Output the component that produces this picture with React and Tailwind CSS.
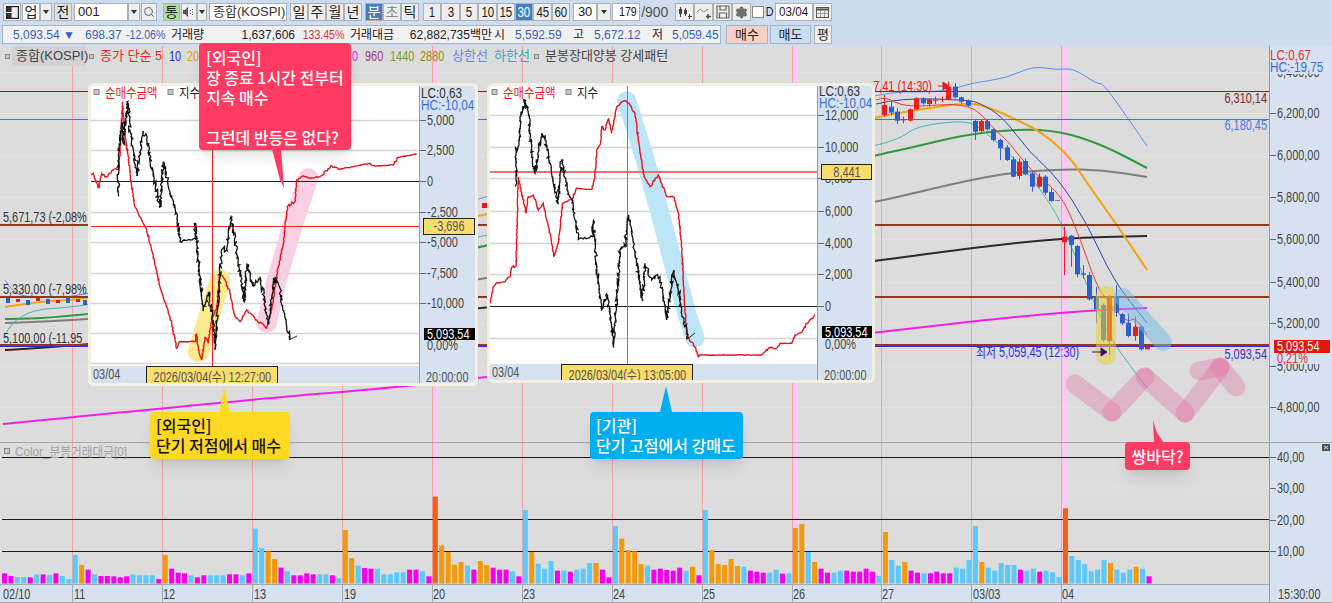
import { Search, Settings } from "lucide-react";

// 30-minute bars, one string per bar: top in crop units, colour key
const barData =
  "400m 408m 411b 411b 412m 403b 403m 405b 400m 408b 417b " +
  "345b 375o 389m 403b 408m 408m 409m 412m 409m 403b 406b 406b 406b 417m " +
  "345o 386m 398m 400m 406b 412m 406m 406b 406b 406b 403m 403m 406b 400m " +
  "266b 324b 334o 357o 383m 394b 406m 406m 400m 403m 403b 403b 406m 415b " +
  "270o 354o 377b 384m 386m 386b 403b 403b 397b 397b 389m 389m 394b 409m " +
  "170d 316o 336o 374o 366o 377b 389m 363o 375o 383m 389m 389m 394b 409m " +
  "210b 336o 371b 386b 363b 392m 392b 395m 389b 386b 369b 369o 389m 412m " +
  "258b 296o 330o 334o 372o 377b 389m 386m 390m 392m 383m 392b 380o 406m " +
  "210b 330o 372o 375o 357o 378o 380b 392m 395m 398m 398b 389b 401m 400b " +
  "264o 252o 336b 366o 386m 398m 398b 392b 392m 395m 395m 386m 395m 408b " +
  "276o 360b 377b 366o 392m 398m 400b 400m 395m 400m 400m 383b 386b 360b " +
  "258b 366o 383b 392b 369b 375b 375b 389m 392b 386b 395m 392b 397b 411b " +
  "205d 348b 360b 372b 394b 389b 360b 369o 389b 398b 389b 380o 386b 409m";
const barColor = { m: "#f500ef", b: "#5cc8fb", o: "#f39a0c", d: "#f0620f" };

const dayLines = [72, 162, 252, 342, 432, 522, 612, 702, 792, 881, 971, 1061];
const bands = [432, 792, 1061];
const dayLabels = [
  [3, "02/10"], [74, "11"], [163, "12"], [254, "13"], [344, "19"], [433, "20"], [523, "23"],
  [613, "24"], [703, "25"], [793, "26"], [882, "27"], [973, "03/03"], [1062, "04"],
];

// x center, body top, body bottom, wick top, wick bottom, red?
const candles = [
  [41, 195, 225, 165, 230, 1], [62, 200, 218, 185, 225, 0], [80, 215, 242, 205, 252, 0], [100, 238, 241, 230, 250, 1],
  [121, 208, 242, 205, 244, 1], [139, 175, 208, 172, 210, 1], [158, 175, 190, 172, 194, 0], [176, 178, 192, 175, 200, 1],
  [195, 179, 182, 170, 192, 1], [215, 177, 180, 170, 186, 1], [235, 140, 178, 125, 180, 1], [255, 140, 172, 130, 175, 0],
  [273, 172, 185, 170, 190, 0], [293, 182, 197, 178, 200, 0], [314, 243, 275, 240, 300, 0], [332, 243, 273, 240, 276, 1],
  [351, 243, 268, 238, 272, 0], [370, 268, 300, 265, 304, 0], [389, 300, 325, 296, 360, 0], [410, 322, 360, 315, 363, 0],
  [428, 358, 410, 350, 412, 0], [448, 365, 408, 355, 418, 1], [466, 363, 403, 355, 406, 0], [486, 400, 440, 395, 455, 0],
  [506, 410, 440, 400, 443, 1], [524, 410, 458, 405, 466, 0], [544, 456, 483, 445, 485, 0], [562, 481, 483, 481, 483, 0],
  [582, 590, 607, 560, 705, 1], [602, 587, 615, 585, 680, 0], [620, 618, 703, 615, 712, 0], [640, 700, 704, 675, 716, 0],
  [658, 705, 778, 695, 782, 0], [678, 770, 808, 740, 850, 0], [698, 795, 900, 790, 905, 0], [716, 772, 903, 765, 945, 1],
  [737, 768, 818, 735, 830, 0], [755, 822, 850, 818, 855, 0], [775, 848, 888, 820, 892, 0], [795, 860, 888, 830, 902, 1],
  [813, 860, 928, 858, 932, 0], [832, 920, 928, 920, 928, 1],
];

const upperTicks = [
  [72, "6,400,00"], [113, "6,200,00"], [155, "6,000,00"], [197, "5,800,00"], [239, "5,600,00"],
  [282, "5,400,00"], [323, "5,200,00"], [366, "5,000,00"], [407, "4,800,00"],
];

const inset1Red = [
  [273, 285], [280, 280], [295, 325], [305, 280], [320, 290], [340, 270], [355, 268], [362, 190], [368, 65], [375, 170], [385, 230],
  [395, 320], [405, 380], [420, 410], [440, 450], [460, 530], [480, 620], [500, 680], [515, 730], [530, 805], [540, 785], [585, 785],
  [590, 760], [595, 810], [605, 840], [615, 770], [625, 790], [635, 720], [650, 680], [660, 580], [675, 600], [690, 640], [705, 710],
  [720, 725], [740, 690], [770, 720], [800, 745], [815, 690], [835, 560], [850, 490], [862, 380], [885, 365], [890, 300], [905, 290],
  [925, 295], [960, 290], [995, 258], [1015, 268], [1060, 260], [1110, 250], [1130, 258], [1180, 255], [1195, 232], [1250, 222],
];
const inset1Black = [
  [355, 345], [355, 225], [365, 130], [370, 190], [383, 65], [390, 150], [400, 210], [410, 285], [430, 155], [440, 180], [460, 290],
  [480, 378], [490, 245], [510, 340], [530, 400], [540, 485], [585, 475], [585, 430], [595, 540], [610, 690], [625, 640], [640, 720],
  [645, 808], [665, 510], [680, 510], [693, 410], [710, 520], [733, 665], [740, 550], [760, 620], [780, 590], [805, 730], [825, 590],
  [840, 625], [848, 690], [870, 780],
];
const inset2Red = [
  [28, 678], [40, 620], [50, 608], [75, 605], [90, 590], [95, 562], [108, 558], [112, 400], [115, 290], [125, 340], [138, 398], [145, 350],
  [160, 345], [175, 390], [190, 370], [200, 420], [212, 470], [222, 530], [235, 490], [248, 370], [258, 365], [275, 360], [290, 325],
  [335, 328], [345, 290], [350, 210], [362, 190], [365, 140], [375, 150], [385, 115], [395, 160], [410, 80], [435, 62], [450, 75], [465, 100],
  [480, 215], [492, 290], [510, 320], [535, 285], [545, 310], [560, 350], [580, 350], [595, 400], [605, 500], [612, 640], [620, 760],
  [630, 785], [640, 790], [655, 830], [665, 825], [750, 825], [845, 825], [865, 805], [890, 805], [900, 790], [935, 790], [945, 765],
  [965, 758], [980, 730], [1005, 705],
];
const inset2Black = [
  [108, 315], [108, 220], [118, 180], [122, 110], [135, 60], [145, 100], [155, 210], [165, 280], [185, 160], [195, 180], [215, 280],
  [233, 370], [245, 240], [262, 330], [280, 380], [295, 478], [338, 470], [340, 425], [350, 560], [365, 690], [380, 640], [395, 740],
  [400, 800], [420, 510], [435, 500], [445, 405], [465, 520], [487, 660], [495, 550], [515, 600], [540, 590], [560, 720], [580, 575],
  [595, 630], [605, 700], [625, 775],
];

// crop coordinates to page coordinates
const mapZ = (pts, ox, oy) => pts.map(([x, y]) => [ox + x / 3, oy + y / 3]);
const toStr = (pts) => pts.map(([x, y]) => `${x.toFixed(1)},${y.toFixed(1)}`).join(" ");

// adds tick-like jitter so a few hand points read as an intraday series
const wiggle = (pts, amp, seed = 1) => {
  const out = [];
  let s = seed;
  const next = () => {
    s = (s * 9301 + 49297) % 233280;
    return s / 233280 - 0.5;
  };
  for (let i = 0; i < pts.length - 1; i++) {
    const [x0, y0] = pts[i];
    const [x1, y1] = pts[i + 1];
    const n = Math.max(1, Math.round(Math.hypot(x1 - x0, y1 - y0) / 1.6));
    for (let k = 0; k < n; k++) {
      const t = k / n;
      const jx = k === 0 ? 0 : next() * amp * 0.35;
      const jy = k === 0 ? 0 : next() * amp;
      // keep flat stretches (lunch gap, closing plateau) quieter than the moving parts
      const flat = Math.abs(y1 - y0) < 4 && Math.abs(x1 - x0) > 10 ? 0.3 : 1;
      out.push([x0 + (x1 - x0) * t + jx * flat, y0 + (y1 - y0) * t + jy * flat]);
    }
  }
  out.push(pts[pts.length - 1]);
  return toStr(out);
};

// moving averages are curves, so run quadratic segments through the midpoints
const smooth = (pts) => {
  let d = `M${pts[0][0]} ${pts[0][1]}`;
  for (let i = 1; i < pts.length - 1; i++) {
    const mx = (pts[i][0] + pts[i + 1][0]) / 2;
    const my = (pts[i][1] + pts[i + 1][1]) / 2;
    d += ` Q${pts[i][0]} ${pts[i][1]} ${mx} ${my}`;
  }
  const last = pts[pts.length - 1];
  return `${d} L${last[0]} ${last[1]}`;
};

const Line = ({ pts, c, w = 1 }) => <path d={smooth(pts)} fill="none" stroke={c} strokeWidth={w} />;

// chart labels use a tall narrow bitmap font in the picture
const T = ({ x, y, c = "#444", s = 14, a = "start", sx = 0.78, children }) => (
  <text transform={`translate(${x} ${y}) scale(${sx} 1)`} fill={c} fontSize={s} textAnchor={a}>
    {children}
  </text>
);

const Btn = ({ className = "", bg = "bg-[#eeeeee]", children }) => (
  <div className={`h-[18px] shrink-0 flex items-center justify-center border border-[#a9b1ba] text-[14px] text-[#222] ${bg} ${className}`}>
    {children}
  </div>
);
const Field = ({ className = "", children }) => (
  <div className={`h-[18px] shrink-0 flex items-center border border-[#a9b1ba] bg-white text-[13px] text-[#222] whitespace-nowrap ${className}`}>
    {children}
  </div>
);
const Drop = ({ className = "" }) => (
  <Btn className={className}>
    <span className="w-0 h-0 border-x-[3.5px] border-x-transparent border-t-[4px] border-t-[#333]" />
  </Btn>
);
const Narrow = ({ children }) => <span className="inline-block scale-x-[.82] whitespace-nowrap">{children}</span>;

const Toolbar = () => (
  <div className="h-[24px] pt-[3px] pl-[3px] flex items-start">
    <Btn className="w-[18px]">
      <svg width="13" height="13" viewBox="0 0 13 13" fill="none" stroke="#222">
        <rect x="0.5" y="0.5" width="12" height="12" strokeWidth="1.4" />
        <rect x="1" y="1" width="4" height="11" fill="#3a3a3a" />
        <path d="M0 6.5h7" stroke="#eee" />
      </svg>
    </Btn>
    <Btn className="w-[18px] ml-px" bg="bg-white">업</Btn>
    <Drop className="w-[12px]" />
    <Btn className="w-[18px] ml-[2px]" bg="bg-[#e2e2e2]">전</Btn>
    <Field className="w-[54px] ml-[2px] pl-[3px]">001</Field>
    <Drop className="w-[12px]" />
    <Btn className="w-[16px] ml-px">
      <Search size={12} color="#666" />
    </Btn>
    <Btn className="w-[17px] ml-[6px] text-[#2f6b2f]" bg="bg-[#b4dc9a]">통</Btn>
    <Btn className="w-[16px] ml-px">
      <svg width="12" height="10" viewBox="0 0 12 10" fill="#555">
        <path d="M0 3h2l3-3v10L2 7H0z" />
        <path d="M7 3h1v1H7zM7 6h1v1H7zM9 2h1v1H9zM9 4.5h1v1H9zM9 7h1v1H9z" />
      </svg>
    </Btn>
    <Drop className="w-[10px]" />
    <Field className="w-[78px] ml-[2px] pl-[3px] text-[#333]">종합(KOSPI)</Field>
    <Btn className="w-[18px] ml-[3px]">일</Btn>
    <Btn className="w-[18px]">주</Btn>
    <Btn className="w-[18px]">월</Btn>
    <Btn className="w-[18px]">년</Btn>
    <Btn className="w-[18px] ml-[3px] !text-white" bg="bg-[#3f7fc4]">분</Btn>
    <Btn className="w-[18px] !text-[#888]">초</Btn>
    <Btn className="w-[18px]">틱</Btn>
    {["1", "3", "5", "10", "15"].map((n, i) => (
      <Btn key={n} className={i === 0 ? "w-[18.4px] ml-[4px]" : "w-[18.4px]"}>
        <Narrow>{n}</Narrow>
      </Btn>
    ))}
    <Btn className="w-[18.4px] !text-white" bg="bg-[#3f7fc4]">
      <Narrow>30</Narrow>
    </Btn>
    <Btn className="w-[18.4px]">
      <Narrow>45</Narrow>
    </Btn>
    <Btn className="w-[18.4px]">
      <Narrow>60</Narrow>
    </Btn>
    <Field className="w-[24px] ml-[3px] justify-center">30</Field>
    <Drop className="w-[14px]" />
    <Field className="w-[28px] ml-px justify-end">
      <Narrow>179</Narrow>
    </Field>
    <div className="w-[35px] pl-px h-[18px] flex items-center text-[14px] text-[#555]">/900</div>
    <Btn className="w-[19px]">
      <svg width="14" height="13" viewBox="0 0 14 13" fill="#444">
        <path d="M1 3h3v5H1zM2 1h1v10H2zM6 4h3v4H6zM7 2h1v8H7z" />
        <path d="M10 10h1V8h1v2h2v1h-2v2h-1v-2h-1z" />
      </svg>
    </Btn>
    <Btn className="w-[19px]">
      <svg width="14" height="13" viewBox="0 0 14 13" fill="none" stroke="#888">
        <path d="M0 6l3-3 4 3 4-3" />
        <path d="M11 8v5M9 10.5h5" stroke="#444" strokeWidth="1.4" />
      </svg>
    </Btn>
    <Btn className="w-[19px]">
      <svg width="14" height="14" viewBox="0 0 14 14" fill="none" stroke="#666" strokeWidth="1.2">
        <path d="M1 1h12v12H1z" />
        <path d="M4 1v4h6V1M3.500 13V8h7v5" />
      </svg>
    </Btn>
    <Btn className="w-[19px]">
      <Settings size={13} color="#666" fill="#777" />
    </Btn>
    <div className="w-[12px] h-[12px] mt-[3px] ml-px border border-[#888] bg-white" />
    <div className="w-[11px] h-[18px] flex items-center justify-center text-[13px] text-[#222]">
      <Narrow>D</Narrow>
    </div>
    <Field className="w-[38px] pl-[3px]">
      <span className="inline-block origin-left scale-x-[.9]">03/04</span>
    </Field>
    <Btn className="w-[19px]">
      <svg width="13" height="12" viewBox="0 0 13 12" fill="none" stroke="#555">
        <rect x="0.5" y="1.5" width="12" height="10" />
        <path d="M0 3.500h13" strokeWidth="2" />
        <path d="M0.500 7.500h12M4.500 4v7M8.500 4v7" stroke="#999" />
      </svg>
    </Btn>
  </div>
);

const InfoRow = () => (
  <div className="h-[22px] pt-px pl-[2px] flex items-start text-[12px]">
    <div className="w-[719px] h-[19px] flex items-center border border-[#aab4c0] bg-[#f1f1f1] pl-[10px] text-[#222] whitespace-nowrap">
      <span className="w-[72px] text-[#2f62c4]">5,093.54 ▼</span>
      <span className="w-[41px] text-[#2f62c4]">698.37</span>
      <span className="w-[45px] text-[#2f62c4]">
        <span className="inline-block origin-left scale-x-[.88]">-12.06%</span>
      </span>
      <span className="w-[50px]">거래량</span>
      <span className="w-[74px] text-right">1,637,606</span>
      <span className="w-[49px] text-right text-[#e03030]">
        <span className="inline-block origin-right scale-x-[.88]">133.45%</span>
      </span>
      <span className="w-[50px] ml-[6px]">거래대금</span>
      <span className="w-[92px] text-right">62,882,735백만</span>
      <span className="w-[21px] ml-[2px]">시</span>
      <span className="w-[58px] text-[#2f62c4]">5,592.59</span>
      <span className="w-[21px]">고</span>
      <span className="w-[58px] text-[#2f62c4]">5,672.12</span>
      <span className="w-[20px]">저</span>
      <span className="text-[#2f62c4]">5,059.45</span>
    </div>
    <div className="w-[42px] h-[19px] ml-[5px] flex items-center justify-center border border-[#aab4c0] bg-[#f6cfc6] text-[13px] text-[#222]">매수</div>
    <div className="w-[41px] h-[19px] ml-[2px] flex items-center justify-center border border-[#aab4c0] bg-[#c8def4] text-[13px] text-[#222]">매도</div>
    <div className="w-[18px] h-[19px] ml-[3px] flex items-center justify-center border border-[#aab4c0] bg-[#eeeeee] text-[13px] text-[#222]">평</div>
  </div>
);

const DayMarks = ({ top, bottom }) => (
  <>
    {bands.map((x) => (
      <rect key={x} x={x} y={top} width="6" height={bottom - top} fill="#fcc9f6" />
    ))}
    {dayLines.map((x) => (
      <line key={x} x1={x + 0.5} x2={x + 0.5} y1={top} y2={bottom} stroke="#f2a4a4" />
    ))}
  </>
);

const UpperPlot = () => (
  <svg className="block w-[1269px] h-[396px]" viewBox="0 46 1269 396">
    <rect x="0" y="46" width="1269" height="396" fill="#dcdcdc" />
    {upperTicks.map(([y]) => (
      <line key={y} x1="0" x2="1269" y1={y + 0.5} y2={y + 0.5} stroke="#e2e2e2" />
    ))}
    <DayMarks top={46} bottom={442} />

    {/* long averages running behind the popups */}
    <Line pts={[[3, 424], [255, 399], [390, 388], [480, 378], [876, 332], [1060, 312], [1147, 308]]} c="#f020e8" w={2} />
    <Line pts={[[5, 350], [50, 348], [480, 310], [876, 261], [970, 248], [1063, 238], [1147, 236]]} c="#2a2a2a" w={2} />
    <Line pts={[[5, 323], [87, 321], [480, 285], [876, 202], [910, 194], [970, 180], [1010, 173], [1060, 169], [1103, 170], [1147, 177]]} c="#7f7f7f" w={2} />
    <Line pts={[[5, 319], [87, 320], [480, 250], [876, 155], [910, 148], [963, 135], [1017, 129], [1060, 131], [1103, 145], [1147, 168]]} c="#2f9a3c" w={2} />
    <Line pts={[[5, 307], [50, 300], [87, 300], [480, 218], [876, 117], [910, 111], [963, 103], [983, 105], [1013, 118], [1043, 133], [1070, 157], [1087, 183], [1117, 225], [1147, 270]]} c="#f2a40f" w={2} />
    <Line pts={[[5, 335], [17, 310], [87, 307], [480, 240], [876, 146], [903, 137], [917, 126], [967, 120], [983, 130], [1017, 160], [1043, 193], [1060, 220], [1077, 260], [1097, 310], [1113, 343], [1147, 388]]} c="#3fb7b7" />
    <Line pts={[[5, 280], [12, 292], [30, 298], [87, 297], [480, 200], [870, 92], [940, 92], [960, 87], [973, 83], [1007, 78], [1033, 66], [1057, 70], [1073, 68], [1097, 84], [1103, 83], [1127, 117], [1147, 146]]} c="#5d8df0" />
    <Line pts={[[876, 104], [900, 98], [967, 100], [980, 103], [1003, 117], [1030, 153], [1057, 177], [1087, 223], [1113, 280], [1147, 323]]} c="#3344a8" />
    <Line pts={[[876, 100], [885, 96], [905, 108], [970, 102], [993, 128], [1010, 143], [1030, 170], [1060, 193], [1077, 230], [1097, 287], [1107, 300], [1127, 323], [1135, 317], [1147, 335]]} c="#e83a3a" />

    {/* level lines */}
    <line x1="0" x2="1269" y1="91.5" y2="91.5" stroke="#8a2222" />
    <line x1="0" x2="1269" y1="119.5" y2="119.5" stroke="#3d6fe8" />
    <line x1="0" x2="1269" y1="225" y2="225" stroke="#8c3b1c" strokeWidth="2" />
    <line x1="0" x2="1269" y1="297" y2="297" stroke="#8c3b1c" strokeWidth="2" />
    <line x1="0" x2="1269" y1="345" y2="345" stroke="#8c3b1c" strokeWidth="2" />
    <line x1="0" x2="1269" y1="346.5" y2="346.5" stroke="#3a2bd0" />

    {/* candles squeezed in left of the first popup */}
    {[8, 18, 28, 38, 48, 58, 68, 78, 85].map((x, i) => (
      <rect key={x} x={x - 2} y={298 + (i % 3)} width="4" height={i % 2 ? 3 : 5} fill={i % 2 ? "#e8141c" : "#2f5fcf"} />
    ))}
    <rect x="482" y="203" width="6" height="5" fill="#e8141c" />

    {candles.map(([x, t, b, wt, wb, red]) => {
      const c = red ? "#ee1c1c" : "#2f5fcf";
      const cx = Math.round(870 + x / 3) + 0.5;
      return (
        <g key={x}>
          <line x1={cx} x2={cx} y1={40 + wt / 3} y2={40 + wb / 3} stroke={c} />
          <rect x={cx - 2.5} y={40 + t / 3} width="5" height={(b - t) / 3} fill={c} />
        </g>
      );
    })}

    {/* marker overlays */}
    <line x1="1106" y1="296" x2="1106" y2="355" stroke="#e6d23a" strokeOpacity="0.55" strokeWidth="20" strokeLinecap="round" />
    <line x1="1123" y1="297" x2="1163" y2="342" stroke="#6fb8e2" strokeOpacity="0.5" strokeWidth="18" strokeLinecap="round" />
    {[
      [1075, 384, 1112, 412], [1112, 412, 1145, 377], [1145, 377, 1185, 413], [1185, 413, 1220, 368],
      [1199, 371, 1220, 367], [1220, 367, 1236, 387],
    ].map(([x1, y1, x2, y2], i) => (
      <line key={i} x1={x1} y1={y1} x2={x2} y2={y2} stroke="#e36fa3" strokeOpacity="0.36" strokeWidth="19" strokeLinecap="round" />
    ))}

    <T x={3} y={222} c="#333">5,671,73 (-2,08%</T>
    <T x={3} y={294} c="#333">5,330,00 (-7,98%</T>
    <T x={3} y={343} c="#333">5,100,00 (-11,95</T>
    <T x={932} y={91} a="end" c="#e02020">7,41 (14:30)</T>
    <path d="M938 86h8M943 82l6 4-6 4z" stroke="#e02020" fill="#e02020" />
    <T x={1267} y={103} a="end" c="#8a2222">6,310,14</T>
    <T x={1267} y={130} a="end" c="#4a78e0">6,180,45</T>
    <T x={1267} y={359} a="end" c="#3333cc">5,093,54</T>
    <T x={976} y={357} c="#3333dd">최저 5,059,45 (12:30)</T>
    <path d="M1092 352h9M1101 348l6 4-6 4z" stroke="#38107a" fill="#38107a" />
  </svg>
);

const UpperAxis = () => (
  <svg className="block w-[63px] h-[396px]" viewBox="1269 46 63 396">
    <rect x="1269" y="46" width="63" height="396" fill="#d6e2ef" />
    <line x1="1269.5" x2="1269.5" y1="46" y2="442" stroke="#9a9a9a" />
    {upperTicks.map(([y, label]) => (
      <g key={y}>
        <line x1="1270" x2="1276" y1={y + 0.5} y2={y + 0.5} stroke="#666" />
        <T x={1277} y={y + 5}>{label}</T>
      </g>
    ))}
    <rect x="1270" y="62" width="62" height="12" fill="#d6e2ef" />
    <T x={1270} y={60} c="#e03030" s={15}>LC:0,67</T>
    <T x={1270} y={72} c="#3a6fd8" s={15}>HC:-19,75</T>
    <rect x="1274" y="340" width="56" height="13" fill="#e8140c" />
    <T x={1277} y={351} c="#ffffff">5,093,54</T>
    <rect x="1270" y="353" width="62" height="11" fill="#d6e2ef" />
    <T x={1277} y={363} c="#e03030">0,21%</T>
  </svg>
);

const LowerPlot = () => (
  <svg className="block w-[1269px] h-[143px]" viewBox="0 442 1269 143">
    <rect x="0" y="442" width="1269" height="143" fill="#dcdcdc" />
    <line x1="0" x2="1269" y1="488" y2="488" stroke="#e2e2e2" />
    <DayMarks top={442} bottom={584} />
    <line x1="0" x2="1269" y1="442.5" y2="442.5" stroke="#a8a8a8" />
    {[457.5, 519.5, 551.5].map((y) => (
      <line key={y} x1="2" x2="1269" y1={y} y2={y} stroke="#1c1c1c" />
    ))}
    {barData.split(" ").map((b, i) => {
      const top = 440 + parseInt(b) / 3;
      return <rect key={i} x={2 + i * 6.43} y={top} width="5" height={583.5 - top} fill={barColor[b.slice(-1)]} />;
    })}
    <line x1="0" x2="1269" y1="584.5" y2="584.5" stroke="#a8a8a8" />
    <rect x="4.5" y="448.5" width="5" height="5" fill="#c8c8c8" stroke="#8a8a8a" />
    <T x={15} y={456} c="#a0a0a0" s={13} sx={0.9}>Color_분봉거래대금[0]</T>
  </svg>
);

const LowerAxis = () => (
  <svg className="block w-[63px] h-[143px]" viewBox="1269 442 63 143">
    <rect x="1269" y="442" width="63" height="143" fill="#d6e2ef" />
    <line x1="1269.5" x2="1269.5" y1="442" y2="585" stroke="#9a9a9a" />
    <line x1="1269" x2="1332" y1="442.5" y2="442.5" stroke="#a8a8a8" />
    {[[457, "40,00"], [488, "30,00"], [520, "20,00"], [551, "10,00"]].map(([y, label]) => (
      <g key={y}>
        <line x1="1270" x2="1276" y1={y + 0.5} y2={y + 0.5} stroke="#666" />
        <T x={1277} y={y + 5}>{label}</T>
      </g>
    ))}
    <rect x="1322" y="444" width="8" height="7" fill="#555" />
    <path d="M1324 446l4 3M1328 446l-4 3" stroke="#ddd" />
  </svg>
);

const DateAxis = () => (
  <div className="h-[18px] flex bg-[#d6e2ef] border-b border-[#a8a8a8]">
    <svg className="block w-[1332px] h-[17px]" viewBox="0 585 1332 17">
      {dayLines.map((x) => (
        <line key={x} x1={x + 0.5} x2={x + 0.5} y1="585" y2="602" stroke="#a8a8a8" />
      ))}
      <line x1="1269.5" x2="1269.5" y1="585" y2="602" stroke="#9a9a9a" />
      {dayLabels.map(([x, label]) => (
        <T key={label} x={x} y={599}>{label}</T>
      ))}
      <T x={1278} y={599}>15:30:00</T>
    </svg>
  </div>
);

const LegendNum = ({ className, children }) => (
  <span className={`shrink-0 text-[14px] ${className}`}>
    <span className="inline-block origin-left scale-x-[.78]">{children}</span>
  </span>
);

const Legend = () => (
  <div className="absolute left-0 top-[46px] h-[20px] w-[680px] flex items-center text-[13px] whitespace-nowrap">
    <span className="ml-[5px] w-[5px] h-[5px] bg-[#c8c8c8] border border-[#8a8a8a]" />
    <span className="ml-[2px] w-[74px] pl-[4px] bg-[#d2d2d2] text-[#444]">종합(KOSPI)</span>
    <span className="ml-[3px] w-[5px] h-[5px] bg-[#c8c8c8] border border-[#8a8a8a]" />
    <span className="ml-[6px] w-[63px] text-[#ee1c1c]">종가 단순 5</span>
    <LegendNum className="ml-[6px] w-[18px] text-[#2233cc]">10</LegendNum>
    <LegendNum className="w-[165px] text-[#e8a010]">20</LegendNum>
    <LegendNum className="w-[13px] text-[#ee22ee]">0</LegendNum>
    <LegendNum className="w-[25px] text-[#a04080]">960</LegendNum>
    <LegendNum className="w-[30px] text-[#78a020]">1440</LegendNum>
    <LegendNum className="w-[32px] text-[#909010]">2880</LegendNum>
    <span className="w-[42px] text-[#5d8df0]">상한선</span>
    <span className="w-[40px] text-[#30b0c0]">하한선</span>
    <span className="w-[5px] h-[5px] bg-[#c8c8c8] border border-[#8a8a8a]" />
    <span className="ml-[6px] text-[#444]">분봉장대양봉 강세패턴</span>
  </div>
);

const InsetLegend = ({ x }) => (
  <>
    <rect x={x} y="89.5" width="5" height="5" fill="#c8c8c8" stroke="#8a8a8a" />
    <T x={x + 11} y={97} c="#ee1c1c" s={13} sx={0.88}>순매수금액</T>
    <rect x={x + 74} y="89.5" width="5" height="5" fill="#c8c8c8" stroke="#8a8a8a" />
    <T x={x + 85} y={97} c="#222" s={13} sx={0.88}>지수</T>
  </>
);

const InsetBottom = ({ tagClass, tag, clock }) => (
  <div className="flex-1 flex bg-[#d6e2ef] text-[14px] text-[#555] whitespace-nowrap">
    <span className="w-[55px] pl-[2px] leading-[16px]">
      <span className="inline-block origin-left scale-x-[.78]">03/04</span>
    </span>
    <span className={`h-full flex items-center justify-center bg-[#f8dc6c] border border-[#222] text-[#555] ${tagClass}`}>
      <span className="inline-block shrink-0 scale-x-[.78]">{tag}</span>
    </span>
    <span className={`ml-auto h-full flex items-center justify-center border-l border-[#9a9a9a] ${clock}`}>
      <span className="inline-block scale-x-[.78]">20:00:00</span>
    </span>
  </div>
);

const InsetOne = () => (
  <div className="absolute left-[88px] top-[83px] w-[390px] h-[303px] flex flex-col border-[3px] border-[#f4f0e2] rounded-md bg-white overflow-hidden">
    <div className="flex">
      <svg className="block w-[328px] h-[280px]" viewBox="91 86 328 280">
        {[120, 150, 212, 242, 273, 303, 333, 363].map((y) => (
          <line key={y} x1="91" x2="419" y1={y + 0.5} y2={y + 0.5} stroke="#d4d4d4" strokeWidth="1.4" />
        ))}
        <polyline points={toStr(mapZ([[595, 815], [660, 600]], 0, 80))} fill="none" stroke="#fbeb8e" strokeWidth="21" strokeLinecap="round" />
        <polyline points={toStr(mapZ([[800, 730], [830, 600], [880, 430], [925, 295]], 0, 80))} fill="none" stroke="#f9cfe3" strokeWidth="20" strokeLinecap="round" strokeLinejoin="round" />
        <line x1="91" x2="419" y1="181.5" y2="181.5" stroke="#222" />
        <line x1="91" x2="419" y1="226.5" y2="226.5" stroke="#ee2020" />
        <line x1="212.5" x2="212.5" y1="86" y2="366" stroke="#ee2020" />
        <polyline points={wiggle(mapZ(inset1Red, 0, 80), 2.6, 7)} fill="none" stroke="#e8141c" strokeWidth="1.4" />
        <polyline points={wiggle(mapZ(inset1Black, 0, 80), 7, 11)} fill="none" stroke="#111" strokeWidth="1.3" />
        <polyline points="290,340 291,339 297,336" fill="none" stroke="#222" />
        <InsetLegend x={94} />
      </svg>
      <svg className="block w-[56px] h-[280px]" viewBox="419 86 56 280">
        <rect x="419" y="86" width="56" height="280" fill="#d6e2ef" />
        <line x1="419.5" x2="419.5" y1="86" y2="366" stroke="#9a9a9a" />
        {[[120, "5,000"], [150, "2,500"], [181, "0"], [212, "-2,500"], [242, "-5,000"], [273, "-7,500"], [303, "-10,000"]].map(([y, label]) => (
          <g key={y}>
            <line x1="420" x2="426" y1={y + 0.5} y2={y + 0.5} stroke="#666" />
            <T x={427} y={y + 5}>{label}</T>
          </g>
        ))}
        <rect x="423.5" y="218.5" width="51" height="16" fill="#f8dc6c" stroke="#222" />
        <T x={449} y={231} a="middle" c="#555">-3,696</T>
        <rect x="424" y="328" width="51" height="12" fill="#000" />
        <T x={427} y={339} c="#fff">5,093,54</T>
        <T x={427} y={350}>0,00%</T>
        <T x={421} y={98} c="#333" s={15}>LC:0,63</T>
        <T x={421} y={110} c="#3a6fd8" s={15}>HC:-10,04</T>
      </svg>
    </div>
    <InsetBottom tagClass="w-[132px]" tag="2026/03/04(수) 12:27:00" clock="w-[56px]" />
  </div>
);

const InsetTwo = () => (
  <div className="absolute left-[487px] top-[83px] w-[388px] h-[300px] flex flex-col border-[3px] border-[#f4f0e2] rounded-md bg-white overflow-hidden">
    <div className="flex">
      <svg className="block w-[327px] h-[278px]" viewBox="490 86 327 278">
        {[115, 147, 178, 211, 243, 274, 338].map((y) => (
          <line key={y} x1="490" x2="817" y1={y + 0.5} y2={y + 0.5} stroke="#d4d4d4" strokeWidth="1.4" />
        ))}
        <polyline points={toStr(mapZ([[440, 62], [490, 220], [540, 400], [580, 550], [620, 700], [645, 775]], 480, 80))} fill="none" stroke="#bde5f8" strokeWidth="19" strokeLinecap="round" strokeLinejoin="round" />
        <line x1="490" x2="817" y1="306.5" y2="306.5" stroke="#222" />
        <line x1="490" x2="817" y1="172" y2="172" stroke="#ec7070" strokeWidth="2" />
        <line x1="627.5" x2="627.5" y1="86" y2="364" stroke="#e85858" />
        <polyline points={wiggle(mapZ(inset2Red, 480, 80), 2.2, 3)} fill="none" stroke="#e8141c" strokeWidth="1.4" />
        <polyline points={wiggle(mapZ(inset2Black, 480, 80), 7, 23)} fill="none" stroke="#111" strokeWidth="1.3" />
        <polyline points="688,338 690,337 695,333" fill="none" stroke="#222" />
        <InsetLegend x={492} />
      </svg>
      <svg className="block w-[55px] h-[278px]" viewBox="817 86 55 278">
        <rect x="817" y="86" width="55" height="278" fill="#d6e2ef" />
        <line x1="817.5" x2="817.5" y1="86" y2="364" stroke="#9a9a9a" />
        {[[115, "12,000"], [147, "10,000"], [178, "8,000"], [211, "6,000"], [243, "4,000"], [274, "2,000"], [306, "0"]].map(([y, label]) => (
          <g key={y}>
            <line x1="818" x2="824" y1={y + 0.5} y2={y + 0.5} stroke="#666" />
            <T x={825} y={y + 5}>{label}</T>
          </g>
        ))}
        <rect x="821.5" y="164.5" width="50" height="15" fill="#f8dc6c" stroke="#222" />
        <T x={847} y={177} a="middle" c="#555">8,441</T>
        <rect x="822" y="326" width="50" height="12" fill="#000" />
        <T x={825} y={337} c="#fff">5,093,54</T>
        <T x={825} y={349}>0,00%</T>
        <T x={819} y={96} c="#333" s={15}>LC:0,63</T>
        <T x={819} y={108} c="#3a6fd8" s={15}>HC:-10,04</T>
      </svg>
    </div>
    <InsetBottom tagClass="w-[132px] ml-[16px]" tag="2026/03/04(수) 13:05:00" clock="w-[55px]" />
  </div>
);

const Callouts = () => (
  <div className="font-['Noto_Sans_CJK_KR',sans-serif] font-medium text-[16px] leading-[20px] whitespace-nowrap">
    <div className="absolute left-[199px] top-[43px] w-[152px] h-[107px] pl-[7px] pt-[4px] rounded bg-[#ff3a63] text-white shadow-lg">
      <p>[외국인]</p>
      <p>장 종료 1시간 전부터</p>
      <p>지속 매수</p>
      <p className="mt-[20px]">그런데 반등은 없다?</p>
    </div>
    <svg className="absolute left-[265px] top-[148px]" width="25" height="42">
      <polygon points="7,1 16,1 19,40 15,32" fill="#ff3a63" />
    </svg>

    <div className="absolute left-[150px] top-[412px] w-[140px] h-[47px] pl-[6px] pt-[3px] rounded bg-[#ffd824] text-[#111] shadow-lg">
      <p>[외국인]</p>
      <p>단기 저점에서 매수</p>
    </div>
    <svg className="absolute left-[215px] top-[386px]" width="20" height="28">
      <polygon points="9,1 4,27 15,27" fill="#ffd824" />
    </svg>

    <div className="absolute left-[590px] top-[412px] w-[153px] h-[47px] pl-[6px] pt-[3px] rounded bg-[#00aeef] text-white shadow-lg">
      <p>[기관]</p>
      <p>단기 고점에서 강매도</p>
    </div>
    <svg className="absolute left-[656px] top-[385px]" width="20" height="28">
      <polygon points="10,1 4,27 16,27" fill="#00aeef" />
    </svg>

    <div className="absolute left-[1125px] top-[442px] w-[65px] h-[28px] flex items-center justify-center rounded bg-[#ff3a63] text-white shadow-lg">
      쌍바닥?
    </div>
    <svg className="absolute left-[1150px] top-[418px]" width="18" height="26">
      <polygon points="3,2 4,25 14,25 7,15" fill="#ff3a63" />
    </svg>
  </div>
);

export default function App() {
  return (
    <div className="relative w-[1332px] h-[603px] overflow-hidden bg-[#cddcee] font-['Liberation_Sans','Noto_Sans_CJK_KR',sans-serif]">
      <Toolbar />
      <InfoRow />
      <div className="flex">
        <UpperPlot />
        <UpperAxis />
      </div>
      <div className="flex">
        <LowerPlot />
        <LowerAxis />
      </div>
      <DateAxis />
      <Legend />
      <InsetOne />
      <InsetTwo />
      <Callouts />
    </div>
  );
}
